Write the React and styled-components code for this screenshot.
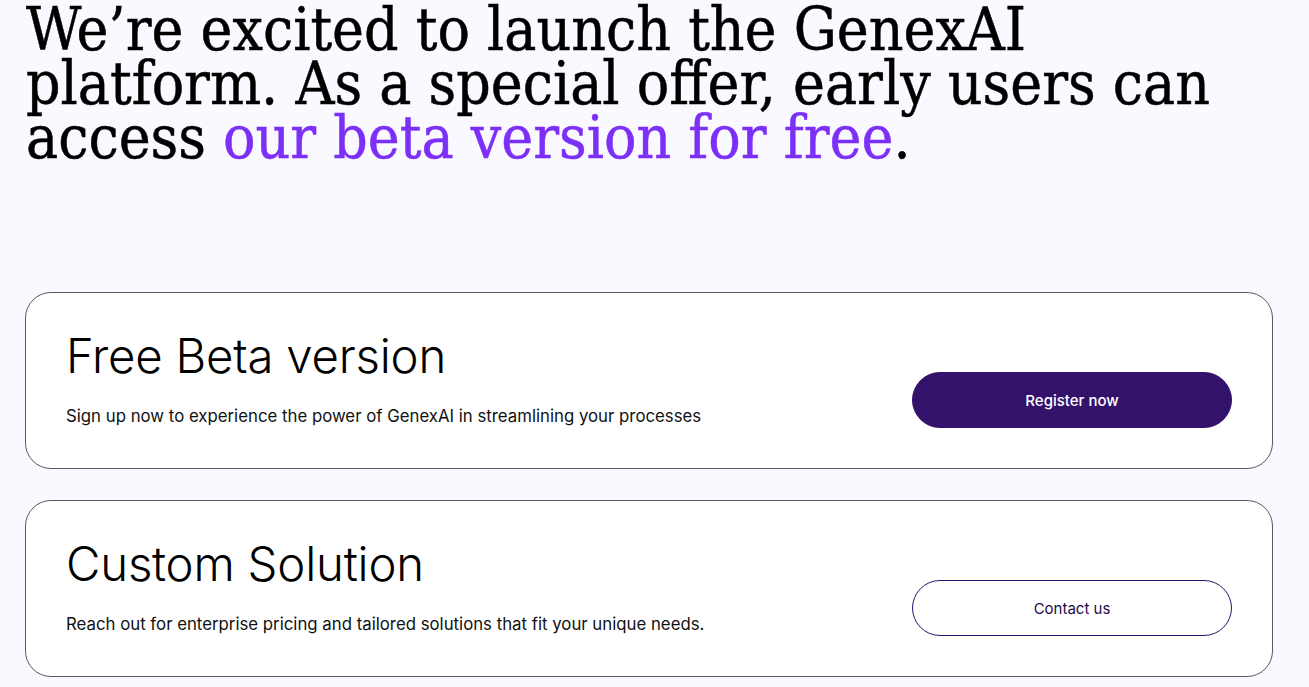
import React from 'react';
import styled, { createGlobalStyle } from 'styled-components';

const GlobalStyle = createGlobalStyle`
    body {
        margin: 0;
        background: #faf9ff;
        font-family: Inter, "Liberation Sans", sans-serif;
        color: #000;
    }
`;

const Page = styled.main`
    padding: 0 36px 0 25px;
    display: flex;
    flex-direction: column;
`;

const Headline = styled.h1`
    margin: 0 0 128px 1px;
    font-family: "DejaVu Serif", "Liberation Serif", serif;
    font-stretch: condensed;
    font-weight: 400;
    font-size: 60px;
    line-height: 54px;
    color: #000;
    padding-top: 2px;
    -webkit-text-stroke: 0.5px currentColor;
`;

const Accent = styled.span`
    color: #7b2ff7;
`;

const Offers = styled.div`
    display: flex;
    flex-direction: column;
    gap: 31px;
`;

const Card = styled.section`
    background: #fff;
    border: 1px solid #5a5a5a;
    border-radius: 26px;
    height: 177px;
    box-sizing: border-box;
    padding: 0 40px 40px 40px;
    display: flex;
    align-items: flex-end;
    justify-content: space-between;
`;

const Text = styled.div`
    display: flex;
    flex-direction: column;
`;

const Title = styled.h2`
    margin: 0 0 19px;
    font-size: 47.3px;
    font-weight: 300;
    line-height: 58px;
    letter-spacing: -0.2px;
`;

const Description = styled.p`
    margin: 0;
    font-size: 16.8px;
    line-height: 24px;
    color: #111;
`;

const Button = styled.button`
    width: 320px;
    height: 56px;
    border-radius: 28px;
    font-family: Inter, "Liberation Sans", sans-serif;
    font-size: 15px;
    font-weight: ${p => (p.$primary ? 500 : 400)};
    cursor: pointer;
    background: ${p => (p.$primary ? '#33126b' : '#fff')};
    color: ${p => (p.$primary ? '#fff' : '#1e0b4a')};
    border: 1px solid ${p => (p.$primary ? '#33126b' : '#2c0f6b')};
`;

const offers = [
    {
        title: 'Free Beta version',
        text: 'Sign up now to experience the power of GenexAI in streamlining your processes',
        action: 'Register now',
        primary: true,
    },
    {
        title: 'Custom Solution',
        text: 'Reach out for enterprise pricing and tailored solutions that fit your unique needs.',
        action: 'Contact us',
        primary: false,
    },
];

const App = () => (
    <>
        <GlobalStyle />
        <Page>
            <Headline>
                We’re excited to launch the GenexAI<br />
                platform. As a special offer, early users can<br />
                access <Accent>our beta version for free</Accent>.
            </Headline>
            <Offers>
                {offers.map(o => (
                    <Card key={o.title}>
                        <Text>
                            <Title>{o.title}</Title>
                            <Description>{o.text}</Description>
                        </Text>
                        <Button $primary={o.primary}>{o.action}</Button>
                    </Card>
                ))}
            </Offers>
        </Page>
    </>
);

export default App;
